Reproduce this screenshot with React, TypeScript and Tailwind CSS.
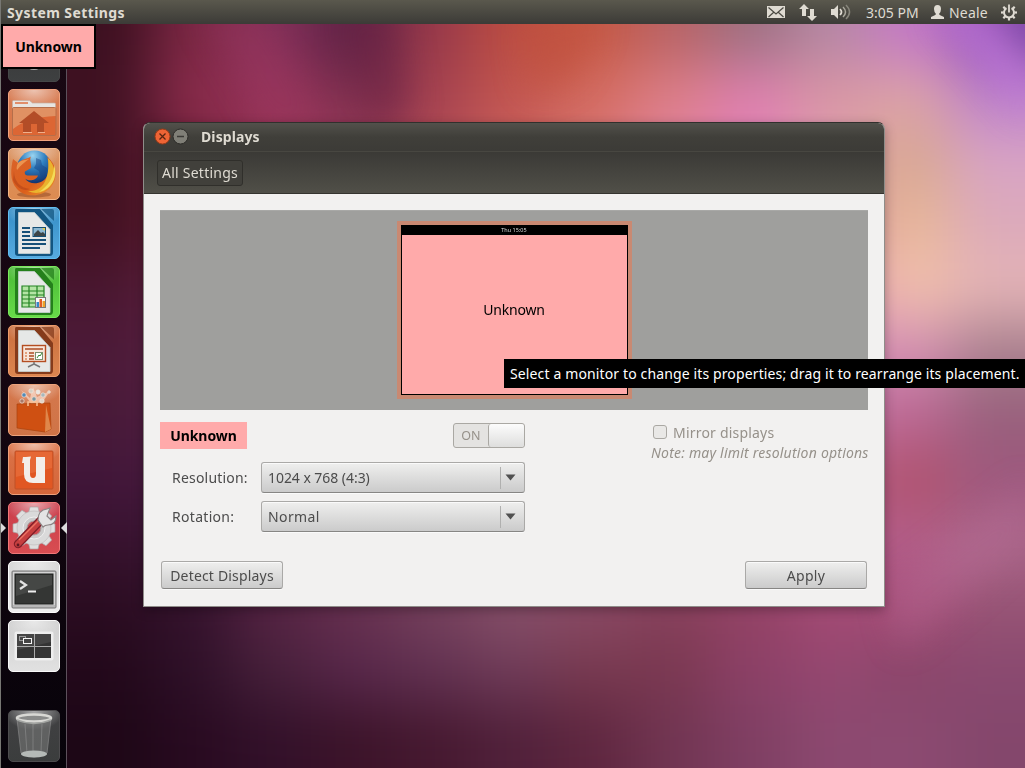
import type { ReactNode } from "react";

const WALLPAPER: string[][] = [
  ["#3c1020", "#7b2743", "#83305a", "#5f2346", "#96384a", "#bb4c42", "#c65843", "#b86264", "#9c7080", "#b588a4", "#c478c8", "#9152b4"],
  ["#3f1122", "#8a2b4a", "#95335a", "#80304f", "#a54250", "#c25650", "#d46c60", "#de8088", "#e080b0", "#d996a4", "#dca4a8", "#bd80cc"],
  ["#3d1020", "#72223c", "#9a3555", "#993a5a", "#b04a55", "#cb6060", "#d87474", "#e080a0", "#e080b8", "#dfa0b0", "#d8a890", "#d8a4c4"],
  ["#40101f", "#6a2038", "#802a48", "#803050", "#a04860", "#b06070", "#c07080", "#c87898", "#d080b0", "#d890a8", "#e8b898", "#dcaaba"],
  ["#491730", "#652344", "#702a50", "#803058", "#904868", "#a06070", "#b07080", "#c078a0", "#c880b0", "#e098b8", "#f2c0ac", "#e4b4b6"],
  ["#4c1a38", "#5b2245", "#642a50", "#703058", "#804060", "#905070", "#a06080", "#b07098", "#c078a8", "#d088b0", "#d490b4", "#a8808e"],
  ["#481a38", "#552045", "#602848", "#703058", "#803860", "#904868", "#a05078", "#b06088", "#b86898", "#c070a0", "#bc6894", "#98607c"],
  ["#41163a", "#4c1c40", "#582448", "#683058", "#703860", "#804068", "#904870", "#a05078", "#b05888", "#b45c88", "#b0526c", "#9e587e"],
  ["#35112c", "#401838", "#502040", "#603050", "#703858", "#804060", "#884068", "#984870", "#a85080", "#b05484", "#b4608c", "#aa6689"],
  ["#2a0c20", "#34122c", "#552343", "#67304f", "#75405c", "#865069", "#8a4a64", "#86405a", "#934264", "#a34a74", "#a44c76", "#965374"],
  ["#22081a", "#2e1028", "#46203a", "#57274a", "#613151", "#6f3b58", "#77394f", "#7a3851", "#8c4067", "#944770", "#8a466a", "#8a4970"],
  ["#1d0716", "#280a20", "#321029", "#3b1329", "#45182f", "#50203a", "#5e263f", "#713552", "#7f3f63", "#8c4970", "#8c4a71", "#84476c"],
];

function Wallpaper() {
  return (
    <svg className="absolute inset-0" width="1025" height="768" viewBox="0 0 1025 768" aria-hidden="true">
      <defs>
        <filter id="soft" x="-100" y="-100" width="1225" height="968" filterUnits="userSpaceOnUse" colorInterpolationFilters="sRGB"><feGaussianBlur stdDeviation="29" /></filter>
        <filter id="streak" x="-100" y="-100" width="1225" height="968" filterUnits="userSpaceOnUse" colorInterpolationFilters="sRGB"><feGaussianBlur stdDeviation="16" /></filter>
      </defs>
      <g filter="url(#soft)">
        {WALLPAPER.map((row, r) =>
          row.map((fill, c) => {
            const left = c === 0 ? -90 : 70 + c * 80;
            const top = r === 0 ? -90 : r * 64;
            const right = c === 11 ? 1125 : 151 + c * 80;
            const bottom = r === 11 ? 870 : (r + 1) * 64 + 1;
            return <rect key={`${r}-${c}`} x={left} y={top} width={right - left} height={bottom - top} fill={fill} />;
          }),
        )}
      </g>
      <g filter="url(#streak)">
        <path d="M330 10 L395 10 L410 110 L370 130 Z" fill="#642043" opacity=".45" />
        <path d="M200 10 L260 10 L330 130 L270 130 Z" fill="#a03a60" opacity=".35" />
        <path d="M930 10 L985 10 L1030 70 L1030 120 Z" fill="#c478e0" opacity=".5" />
        <path d="M1010 5 L1040 5 L1040 75 Z" fill="#6a3c98" opacity=".7" />
        <path d="M520 20 L600 20 L570 80 L530 90 Z" fill="#c0503c" opacity=".5" />
        <path d="M885 590 L1030 480 L1030 540 L900 650 Z" fill="#bd6f9d" opacity=".3" />
      </g>
    </svg>
  );
}

function Tile({ from, to, edge, children }: { from: string; to: string; edge: string; children: ReactNode }) {
  const id = `t${from.slice(1)}${to.slice(1)}`;
  return (
    <svg width="52" height="52" viewBox="0 0 52 52" className="block shrink-0">
      <defs>
        <linearGradient id={id} x1="0" y1="0" x2="0" y2="1"><stop stopColor={from} /><stop offset="1" stopColor={to} /></linearGradient>
        <radialGradient id={`${id}g`} cx=".5" cy="0" r=".6"><stop stopColor="#fff" stopOpacity=".55" /><stop offset="1" stopColor="#fff" stopOpacity="0" /></radialGradient>
      </defs>
      <rect x=".5" y=".5" width="51" height="51" rx="4.5" fill={`url(#${id})`} stroke={edge} />
      <rect x="1" y="1" width="50" height="32" rx="4" fill={`url(#${id}g)`} />
      {children}
    </svg>
  );
}

function HomeFolder() {
  return (
    <Tile from="#d77d55" to="#d97443" edge="#f1a37f">
      <path d="M4.500 12.500q0-1 1-1h16l3 2.500h22q1 0 1 1v12h-43z" fill="#e8e5e1" stroke="#c5afa2" strokeWidth=".7" />
      <path d="M7 14h13" stroke="#df7142" strokeWidth="1.500" />
      <rect x="4.500" y="18.500" width="43.500" height="28" rx="1.500" fill="#dc6634" stroke="#b56e4a" />
      <path d="M5 19h42.500v8Q20 28 5 40z" fill="#e4b58a" opacity=".55" />
      <path d="M26 22l15 12h-5v9h-7v-8h-6v8h-8v-9h-4z" fill="#b34d27" />
      <path d="M15 43.500h9M30 43.500h7" stroke="#f0b08c" />
    </Tile>
  );
}

function Firefox() {
  return (
    <Tile from="#d9915f" to="#dd8b51" edge="#f2b687">
      <defs>
        <radialGradient id="globe" cx=".45" cy=".15" r=".8"><stop stopColor="#9ad4f0" /><stop offset=".45" stopColor="#2f7fc0" /><stop offset="1" stopColor="#12316d" /></radialGradient>
        <linearGradient id="fox" x1="0" x2="1" y2="1"><stop stopColor="#d9632a" /><stop offset=".6" stopColor="#dc5f1c" /><stop offset="1" stopColor="#eda032" /></linearGradient>
      </defs>
      <ellipse cx="26" cy="46.500" rx="17" ry="3" fill="#8d461f" opacity=".5" />
      <circle cx="26.500" cy="20" r="17.500" fill="url(#globe)" />
      <path d="M28 10l5 2 1 5 5 3-1 7-5 3-2-7-5-3 2-4z" fill="#174486" opacity=".5" />
      <path d="M5 11l5 4C13 11 20 11 23 8.500 21 12 24 16 23 20l-6 3.500c-1 2.500 1 4.500 5 4h8C28 33 20 33.500 17 30.500 21 37.500 35 37 39 28c3-7 2-13 0-19 9 6 11 19 6 27-7 13-27 15-36 5C1 32 3 20 5 11z" fill="url(#fox)" />
      <path d="M40 10c8 8 8 20 3 27-6 8-15 10-23 6 15 1 22-12 20-33z" fill="#eab32e" />
      <path d="M46 17c4 10-1 24-15 27 9-6 15-14 15-27z" fill="#f3db57" />
      <path d="M6 23C6 33 12 40 22 41 15 44 8 39 5 32z" fill="#b9471a" opacity=".7" />
      <path d="M10 15c3-3 8-3 11-4-4 3-8 6-12 11-1-2 0-5 1-7z" fill="#f0a05a" opacity=".8" />
    </Tile>
  );
}

function OfficePage({ dark, children }: { dark: string; children: ReactNode }) {
  return (
    <>
      <path d="M8 2h24l13 16v27q0 4-3 4H10q-3 0-3-3V4q0-2 1-2z" fill={dark} />
      <path d="M10.500 5.500h16l15.500 17v24H10.500z" fill="#e6e8e7" stroke="#c8d2d2" strokeWidth=".8" />
      <path d="M33 2h11q2 0 2 2v10z" fill={dark} opacity=".75" />
      {children}
    </>
  );
}

function Writer() {
  return (
    <Tile from="#348dc6" to="#57abe0" edge="#61bdf0">
      <OfficePage dark="#125581">
        <path d="M14 21h8M14 25h8M14 29h8M14 33h24M14 37h24M14 41h18" stroke="#165078" strokeWidth="2" />
        <rect x="25" y="20.500" width="12.500" height="9" fill="#8cb8d2" stroke="#164f75" />
        <path d="M26 29v-2l4-4 3 3 2-1 2 2v2z" fill="#3d4547" />
        <path d="M34 21h3v3z" fill="#e8cd45" />
      </OfficePage>
    </Tile>
  );
}

function Calc() {
  return (
    <Tile from="#49b935" to="#68db49" edge="#7ae95c">
      <OfficePage dark="#24801b">
        <path d="M14 20h22v21H14z" fill="#b4e4a5" stroke="#238323" strokeWidth="1.200" />
        <path d="M14 25h22M14 29h22M14 33h22M14 37h22M21 20v21M29 20v21" stroke="#238323" strokeWidth="1.200" />
        <rect x="27.500" y="31.500" width="10" height="10" fill="#fafafa" stroke="#797979" />
        <rect x="28.500" y="36" width="2.500" height="5" fill="#3488c9" /><rect x="31.500" y="33" width="2.500" height="8" fill="#e05b25" /><rect x="34.500" y="35" width="2.500" height="6" fill="#eda129" />
      </OfficePage>
    </Tile>
  );
}

function Impress() {
  return (
    <Tile from="#c96d3d" to="#dc8650" edge="#ec9c6c">
      <OfficePage dark="#853b1b">
        <rect x="14.500" y="20.500" width="23" height="16" fill="#f7e7db" stroke="#b44e22" strokeWidth="1.400" />
        <path d="M17 24h18M21 28h5M21 31h5M21 34h5" stroke="#ad4c25" strokeWidth="1.500" /><path d="M17 28h2M17 31h2M17 34h2" stroke="#dc8b5d" strokeWidth="1.500" />
        <rect x="27.500" y="27.500" width="7" height="7" fill="#fff" stroke="#7d9070" /><path d="M29 33l2-3 1 1 2-3" fill="none" stroke="#348c34" />
        <path d="M26 37v2l-6 3M26 39l6 3" fill="none" stroke="#777" strokeWidth="1.500" />
      </OfficePage>
    </Tile>
  );
}

function SoftwareCenter() {
  return (
    <Tile from="#d5784d" to="#cf7447" edge="#eca37c">
      <path d="M25 22L13 6l9 8 3-11 4 10 13-6-10 15z" fill="#ffe4d5" opacity=".6" />
      <path d="M9 20l33-1 1 26-6 3-28-4z" fill="#cf5012" stroke="#a9430f" strokeWidth=".7" />
      <path d="M38 21l5 24-6 3z" fill="#df874b" />
      <path d="M20 22v-4h9v4" fill="none" stroke="#fac092" strokeWidth="1.500" />
      {([[16, 11, "#4f8ab8"], [23, 7, "#d7d1c5"], [30, 8, "#e9e7e2"], [35, 11, "#a7b8bd"], [14, 17, "#ab7967"], [26, 15, "#78979f"], [41, 8, "#ddd0c0"], [34, 17, "#e2d5c8"]] as const).map(([x, y, c]) => (
        <circle key={`${x}-${y}`} cx={x} cy={y} r={x > 38 ? 1.3 : 2.2} fill={c} stroke="#f4e2d7" strokeWidth=".7" />
      ))}
    </Tile>
  );
}

function UbuntuOne() {
  return (
    <Tile from="#db7348" to="#d5663a" edge="#eda07b">
      <rect x="7" y="8" width="38" height="38" rx="1" fill="#e15722" stroke="#bf5228" />
      <path d="M8 9h36v16L8 34z" fill="#eb7a48" opacity=".5" />
      <path d="M15 14h3l5-.5-1 3.500v14q0 4 3 4 3 0 3-4V14h9v26H25q-9 0-9-9V20h-2z" fill="#f3eee9" />
    </Tile>
  );
}

function SettingsIcon() {
  return (
    <Tile from="#c93e4c" to="#d84d51" edge="#f07778">
      <g transform="translate(26 26)">
        {[0, 45, 90, 135, 180, 225, 270, 315].map((a) => <path key={a} transform={`rotate(${a})`} d="M-4-21h8l2 8H-6z" fill="#dfdfdf" stroke="#aaa5a5" strokeWidth=".7" />)}
        <circle r="17" fill="#dadada" stroke="#b5b1b1" strokeWidth=".5" />
        <circle r="11" fill="#ccc" stroke="#f0f0f0" /><circle r="7" fill="#cf4b51" stroke="#a8a4a4" />
      </g>
      <path d="M10 42l24-25" stroke="#811e28" strokeWidth="8.500" strokeLinecap="round" />
      <path d="M10 42l23-24" stroke="#c63f3f" strokeWidth="6" strokeLinecap="round" />
      <path d="M11 38l20-20" stroke="#ec7464" strokeWidth="1.200" />
      <path d="M30 18q0-10 9-11l3-1-3 8 4 4 5-4q0 9-8 9-3 0-5 2z" fill="#e4e4e4" stroke="#8b8585" strokeWidth="1.200" />
      <circle cx="10" cy="43" r="1.400" fill="#5f1620" />
    </Tile>
  );
}

function Terminal() {
  return (
    <Tile from="#d2d2d2" to="#eeeeee" edge="#fafafa">
      <rect x="4" y="10" width="44" height="37" rx="1" fill="#b7b7b7" stroke="#777" />
      <rect x="5" y="11" width="42" height="33" fill="#d4d4d4" />
      <rect x="7" y="13" width="38" height="30" fill="#343634" stroke="#1c1f1d" />
      <path d="M8 14h36v10L8 35z" fill="#555855" opacity=".5" />
      <path d="M12 20l6 4-6 4" fill="none" stroke="#e3e3e3" strokeWidth="2.200" /><path d="M20 30.500h8" stroke="#eee" strokeWidth="2" />
    </Tile>
  );
}

function Workspaces() {
  return (
    <Tile from="#cecece" to="#e1e1e1" edge="#f8f8f8">
      <rect x="6.500" y="11.500" width="39" height="29" rx="2" fill="#eeeeee" />
      <rect x="9" y="14" width="34" height="24" fill="#343434" />
      <path d="M9 14h34v8L9 30z" fill="#555" opacity=".5" />
      <path d="M26.500 14v24M9 26.500h34" stroke="#aaa" />
      <rect x="11.500" y="16.500" width="6" height="4" fill="none" stroke="#999" />
      <rect x="15.500" y="18.500" width="8" height="5" fill="#444" stroke="#f5f5f5" />
    </Tile>
  );
}

function Trash() {
  return (
    <Tile from="#414143" to="#3b3d3d" edge="#4d4c4e">
      <path d="M9 9l4 34q13 8 26 0l4-34z" fill="#777877" opacity=".6" stroke="#aaa" strokeWidth=".8" />
      <path d="M17 14l2 29M34 14l-1 28M25 14v28" stroke="#bcbcbc" opacity=".3" />
      <ellipse cx="26" cy="44" rx="13" ry="3.500" fill="#b5bab7" />
      <ellipse cx="26" cy="8" rx="17" ry="3.500" fill="#8a8b8a" stroke="#d8d8d4" strokeWidth="2.600" />
      <path d="M9 10q17 7 34 0" fill="none" stroke="#a2a4a1" strokeWidth="1.500" />
    </Tile>
  );
}

function TopBar() {
  return (
    <header className="relative flex h-6 w-full items-center bg-linear-to-b from-[#5a584d] to-[#3c3b37] pr-2 pl-1.5 text-[14px] text-[#dfdbd2]">
      <b className="tracking-[0.41px]">System Settings</b>
      <div className="ml-auto flex items-center">
        <svg width="18" height="12" viewBox="0 0 18 12" className="mr-[14px]"><path d="M0 0h18v12H0z" fill="#dfdbd2" /><path d="M1.500 1.500L9 8l7.500-6.500M1.500 11l5.500-5M16.500 11L11 6" fill="none" stroke="#4b4a43" strokeWidth="1.200" /></svg>
        <svg width="18" height="17" viewBox="0 0 18 17" className="mr-3.5" fill="#dfdbd2"><path d="M5 0l5 5H7v7H3V5H0zM11 5h4v7h3l-5 5-5-5h3z" /></svg>
        <svg width="20" height="16" viewBox="0 0 20 16" className="mr-[15px]"><path d="M0 5h3l4-4v14l-4-4H0z" fill="#dfdbd2" /><path d="M9 5q3 3 0 6" fill="none" stroke="#dfdbd2" strokeWidth="1.700" /><path d="M12 3q5 5 0 10" fill="none" stroke="#aaa79c" strokeWidth="1.500" /><path d="M15 1q7 7 0 14" fill="none" stroke="#87857b" strokeWidth="1.500" /></svg>
        <span className="w-[53px] whitespace-nowrap">3:05 PM</span>
        <svg width="13" height="14" viewBox="0 0 13 14" className="ml-3 mr-[5px]" fill="#dfdbd2"><path d="M3 4q0-4 3.500-4T10 4q0 3-2 5 0 1 5 3v2H0v-2q5-2 5-3-2-2-2-5z" /></svg>
        <span className="w-10 tracking-[0.2px]">Neale</span>
        <svg width="16" height="17" viewBox="-8 -8.500 16 17" className="ml-3" stroke="#dfdbd2" fill="none">
          <path d="M-2.500-4.300A5 5 0 1 0 2.500-4.300" strokeWidth="2" /><path d="M0-8v8" strokeWidth="1.800" />
          {[45, 90, 135, 180, 225, 270, 315].map((a) => <path key={a} transform={`rotate(${a})`} d="M0-5.500v-2.500" strokeWidth="2.200" />)}
        </svg>
      </div>
    </header>
  );
}

function Launcher() {
  return (
    <aside className="relative flex h-[744px] w-[67px] flex-col gap-[7px] border-r border-[#5c505b] bg-linear-to-b from-[#190813] via-[#150610] to-[#07030a] pt-1.5 pl-2">
      <Tile from="#363737" to="#3e4041" edge="#464848"><ellipse cx="26" cy="36" rx="7" ry="4" fill="#aaa" /></Tile>
      <HomeFolder />
      <Firefox />
      <Writer />
      <Calc />
      <Impress />
      <SoftwareCenter />
      <UbuntuOne />
      <div className="relative">
        <SettingsIcon />
        <svg width="7" height="12" viewBox="0 0 7 12" className="absolute top-[20px] -left-2"><path d="M0 0l6 6-6 6z" fill="#dcdcdc" /></svg>
        <svg width="6" height="12" viewBox="0 0 6 12" className="absolute top-[20px] left-[53px]"><path d="M6 0L0 6l6 6z" fill="#dcdcdc" /></svg>
      </div>
      <Terminal />
      <Workspaces />
      <div className="mt-[31px]"><Trash /></div>
    </aside>
  );
}

const BUTTON = "flex items-center rounded-[3px] border border-[#aaa9a7] border-b-[#878684] bg-linear-to-b from-[#efefee] to-[#cbcbcb] text-[#4c4c4c] shadow-[inset_0_1px_0_#fafafa,0_1px_0_#fafafa]";

function Select({ value, tight }: { value: string; tight?: boolean }) {
  return (
    <div className={`${BUTTON} h-[31px] w-[264px] pl-1.5`}>
      <span className={tight ? "tracking-[-0.05px]" : "tracking-[0.4px]"}>{value}</span>
      <span className="ml-auto flex h-[22px] w-6 items-center border-l border-[#b0b0af] pl-1">
        <svg width="11" height="7" viewBox="0 0 11 7"><path d="M.5 .5h10L5.500 6.500z" fill="#505050" /></svg>
      </span>
    </div>
  );
}

function DisplaysWindow() {
  return (
    <main className="absolute top-[122px] left-[142px] flex h-[485px] w-[742px] flex-col overflow-hidden rounded-t-[7px] border border-[#8f8d89] border-t-[#31302d] bg-[#f2f1f0] text-[#4c4c4c] shadow-[0_3px_12px_rgba(0,0,0,.3)]">
      <div className="flex h-[29px] shrink-0 items-center border-b border-[#484741] bg-linear-to-b from-[#52514b] via-[#403f3a] to-[#3c3b37] pb-0.5 pl-2.5">
        <div className="flex gap-px rounded-full">
          <svg width="17" height="17" viewBox="0 0 17 17"><circle cx="8.500" cy="8.500" r="7.500" fill="#ee6435" stroke="#9a3b18" /><path d="M5.500 5.500l6 6m0-6l-6 6" stroke="#572411" strokeWidth="1.300" /></svg>
          <svg width="17" height="17" viewBox="0 0 17 17"><circle cx="8.500" cy="8.500" r="7.500" fill="#807f77" stroke="#2d2c29" /><path d="M5 8.500h7" stroke="#3b3a36" strokeWidth="1.300" /></svg>
        </div>
        <b className="ml-3 text-[14px] tracking-[0.1px] text-[#dfdbd2]">Displays</b>
      </div>
      <div className="flex h-[42px] shrink-0 items-center border-b border-[#35342f] bg-linear-to-b from-[#3b3a36] to-[#504f48] pl-[13px]">
        <div className="flex h-[26px] w-[86px] items-center justify-center rounded-[3px] border border-[#302f2b] bg-[#41403b] tracking-[0.25px] whitespace-nowrap text-[#dfdbd2]">All Settings</div>
      </div>
      <div className="flex flex-col pt-4 pr-4 pl-4">
        <div className="flex h-[200px] w-[708px] justify-center border-t border-[#a8a8a6] bg-[#9f9f9d] pt-[10px]">
          <div className="h-[178px] w-[235px] border-[4px] border-[#c98972]">
            <div className="flex h-full flex-col border border-black bg-[#ffaaaa] text-black">
              <div className="flex h-[9px] items-center justify-center bg-black text-[5.500px] leading-none text-[#ddd]">Thu 15:05</div>
              <div className="flex h-[148px] items-center justify-center tracking-[-0.2px]">Unknown</div>
            </div>
          </div>
        </div>
        <div className="flex justify-between">
          <section className="w-[365px] pt-3">
            <div className="flex h-[27px] items-center justify-between">
              <b className="flex h-[27px] w-[87px] items-center justify-center bg-[#ffaaaa] tracking-[-0.05px] text-black">Unknown</b>
              <div className="flex h-[25px] w-[72px] rounded-[3px] border border-[#aaa8a3] bg-[#e4e3e1]">
                <span className="flex flex-1 items-center justify-center text-[12.500px] text-[#96918a]">ON</span>
                <span className="w-[36px] rounded-[3px] border-l border-[#aaa8a3] bg-linear-to-b from-[#fcfcfc] to-[#dededd]" />
              </div>
            </div>
            <div className="mt-[13px] flex items-center justify-between pl-3"><span className="tracking-[0.2px]">Resolution:</span><Select value="1024 x 768 (4:3)" tight /></div>
            <div className="mt-2 flex items-center justify-between pl-3"><span className="tracking-[0.3px]">Rotation:</span><Select value="Normal" /></div>
          </section>
          <section className="w-[217px] pt-3 text-[#96918a]">
            <div className="flex h-5 items-center"><span className="mr-1.5 ml-0.5 size-[14px] rounded-[3px] border border-[#aaa8a3] bg-[#e9e8e6]" /><span className="tracking-[0.2px]">Mirror displays</span></div>
            <i className="mt-px block h-5 leading-5 tracking-[0.21px] whitespace-nowrap">Note: may limit resolution options</i>
          </section>
        </div>
        <div className="mt-[29px] flex justify-between px-px">
          <div className={`${BUTTON} h-[28px] w-[122px] justify-center tracking-[0.18px] whitespace-nowrap`}>Detect Displays</div>
          <div className={`${BUTTON} h-[28px] w-[122px] justify-center tracking-[0.35px]`}>Apply</div>
        </div>
      </div>
    </main>
  );
}

export default function App() {
  return (
    <div className="relative h-[768px] w-[1025px] overflow-hidden border-l border-[#777773] font-['Noto_Sans','Open_Sans',sans-serif] text-[14px] leading-[19px]">
      <Wallpaper />
      <TopBar />
      <div className="-ml-px"><Launcher /></div>
      <DisplaysWindow />
      <div className="absolute top-[24px] left-0 flex h-[45px] w-[95px] items-center justify-center border-2 border-black bg-[#ffaaaa] font-bold tracking-[-0.05px]">Unknown</div>
      <div className="absolute top-[359px] left-[503px] flex h-[29px] w-[522px] items-center bg-black pl-1.5 tracking-[0.13px] whitespace-nowrap text-white">Select a monitor to change its properties; drag it to rearrange its placement.</div>
    </div>
  );
}
